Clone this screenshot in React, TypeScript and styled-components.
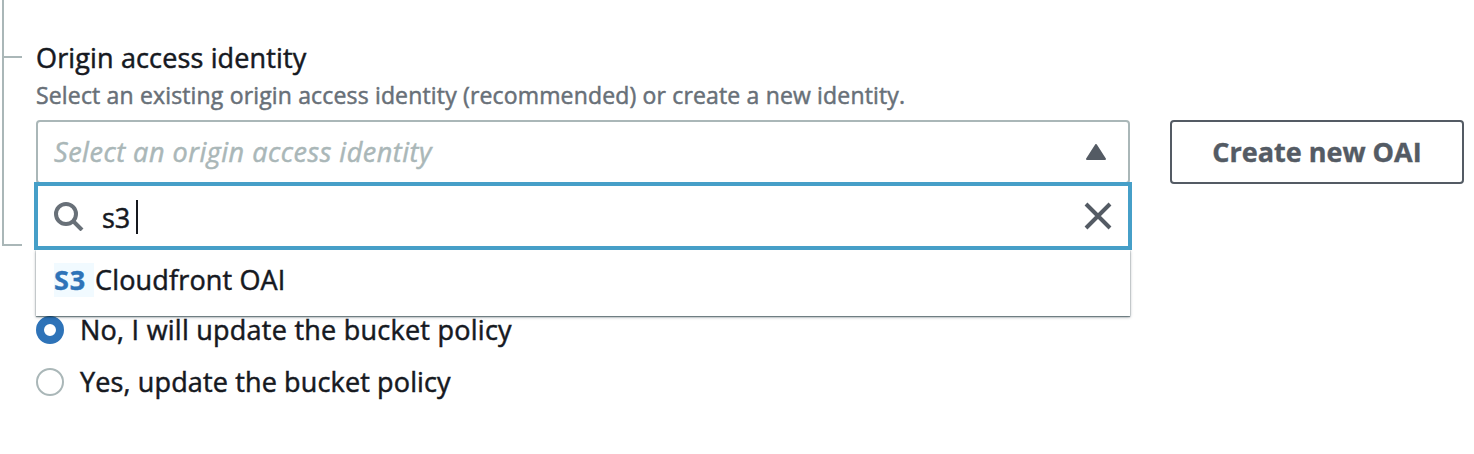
import React from "react";
import styled, { createGlobalStyle } from "styled-components";

const GlobalStyle = createGlobalStyle`
  *, *::before, *::after { box-sizing: border-box; }
  body {
    margin: 0;
    background: #fff;
    color: #16191f;
    font-family: "Open Sans", "Noto Sans", sans-serif;
    font-size: 27px;
    font-weight: 400;
    overflow: hidden;
  }
`;

const Page = styled.main`
  display: flex;
  height: 454px;
`;

const Branch = styled.div`
  display: flex;
  flex-direction: column;
  justify-content: flex-start;
  width: 20px;
  height: 246px;
  margin: 0 14px 0 2px;
  padding-top: 56px;
  border-left: 2px solid #aab7b8;
  border-bottom: 2px solid #aab7b8;
`;

const Tick = styled.span`
  height: 2px;
  background: #aab7b8;
`;

const Form = styled.section`
  flex: 1;
  padding: 40px 10px 0 0;
`;

const Text = styled.span<{ $spacing?: number; $bold?: boolean }>`
  letter-spacing: ${(p) => p.$spacing ?? 0}px;
  -webkit-text-stroke: ${(p) => (p.$bold ? 0.4 : 0.5)}px currentColor;
  white-space: pre;
`;

const Label = styled.div`
  height: 36px;
  line-height: 36px;
`;

const Hint = styled.div`
  height: 44px;
  color: #687078;
  font-size: 23px;
  line-height: 38px;
`;

const Row = styled.div`
  display: flex;
  gap: 40px;
  height: 64px;
`;

const SelectWrap = styled.div`
  position: relative;
  width: 1094px;
`;

const Trigger = styled.div`
  display: flex;
  align-items: center;
  justify-content: space-between;
  height: 64px;
  padding: 0 22px 0 16px;
  border: 2px solid #aab7b8;
  border-radius: 4px;
  color: #aab7b8;
  font-style: italic;
  line-height: 36px;
`;

const Menu = styled.div`
  position: absolute;
  top: 62px;
  left: -2px;
  width: 1098px;
  z-index: 1;
`;

const Search = styled.div`
  position: relative;
  display: flex;
  align-items: center;
  height: 68px;
  padding: 0 16px;
  border: 4px solid #469fc8;
  background: #fff;
  z-index: 1;
`;

const Query = styled.span`
  flex: 1;
  display: flex;
  align-items: center;
  margin-left: 18px;
  padding-top: 2px;
`;

const Caret = styled.span`
  width: 2px;
  height: 34px;
  margin-left: 6px;
  background: #16191f;
`;

const Option = styled.div`
  display: flex;
  align-items: center;
  height: 66px;
  margin: 0 2px;
  padding: 0 18px 7px;
  background: #fff;
  box-shadow: 0 1px 1px 0 rgba(0, 28, 36, 0.4), 0 1px 3px 0 rgba(0, 28, 36, 0.4), 0 0 1px rgba(0, 28, 36, 0.2);
`;

const Match = styled.mark`
  width: 40px;
  height: 34px;
  margin-right: 1px;
  background: #f1faff;
  color: #2e73b8;
  font-weight: 700;
  line-height: 34px;
`;

const Button = styled.button`
  width: 294px;
  height: 64px;
  padding: 0 0 2px;
  border: 2px solid #545b64;
  border-radius: 4px;
  background: #fff;
  color: #545b64;
  font: inherit;
  font-weight: 700;
`;

const Choices = styled.div`
  display: flex;
  flex-direction: column;
  gap: 16px;
  padding-top: 128px;
`;

const Choice = styled.label`
  display: flex;
  align-items: center;
  gap: 16px;
  height: 36px;

  ${Text} { padding-bottom: 2px; }
`;

const Radio = styled.span<{ $checked?: boolean }>`
  width: 28px;
  height: 28px;
  border: ${(p) => (p.$checked ? "8px solid #2e73b8" : "2px solid #aab7b8")};
  border-radius: 50%;
  background: #fff;
`;

export default function App() {
  return (
    <>
      <GlobalStyle />
      <Page>
        <Branch><Tick /></Branch>
        <Form>
          <Label><Text $spacing={0.14}>Origin access identity</Text></Label>
          <Hint>
            <Text $spacing={0.16}>Select an existing origin access identity (recommended) or create a new identity.</Text>
          </Hint>
          <Row>
            <SelectWrap>
              <Trigger>
                <Text $spacing={0.52}>Select an origin access identity</Text>
                <svg width="20" height="16" viewBox="0 0 20 16">
                  <path d="M10 1 L19 15 H1 Z" fill="#545b64" stroke="#545b64" strokeWidth="2" strokeLinejoin="round" />
                </svg>
              </Trigger>
              <Menu>
                <Search>
                  <svg width="30" height="30" viewBox="0 0 30 30" fill="none" stroke="#687078" strokeWidth="4">
                    <circle cx="12" cy="13" r="10" />
                    <path d="M19 20 L28 29" />
                  </svg>
                  <Query><Text>s3</Text><Caret /></Query>
                  <svg width="28" height="28" viewBox="0 0 28 28" stroke="#545b64" strokeWidth="4">
                    <path d="M2 2 L26 26 M26 2 L2 26" />
                  </svg>
                </Search>
                <Option>
                  <Match><Text $bold $spacing={1}>S3</Text></Match>
                  <Text $spacing={0.16}>Cloudfront OAI</Text>
                </Option>
              </Menu>
            </SelectWrap>
            <Button><Text $bold>Create new OAI</Text></Button>
          </Row>
          <Choices>
            <Choice><Radio $checked /><Text $spacing={0.25}>No, I will update the bucket policy</Text></Choice>
            <Choice><Radio /><Text $spacing={0.14}>Yes, update the bucket policy</Text></Choice>
          </Choices>
        </Form>
      </Page>
    </>
  );
}
